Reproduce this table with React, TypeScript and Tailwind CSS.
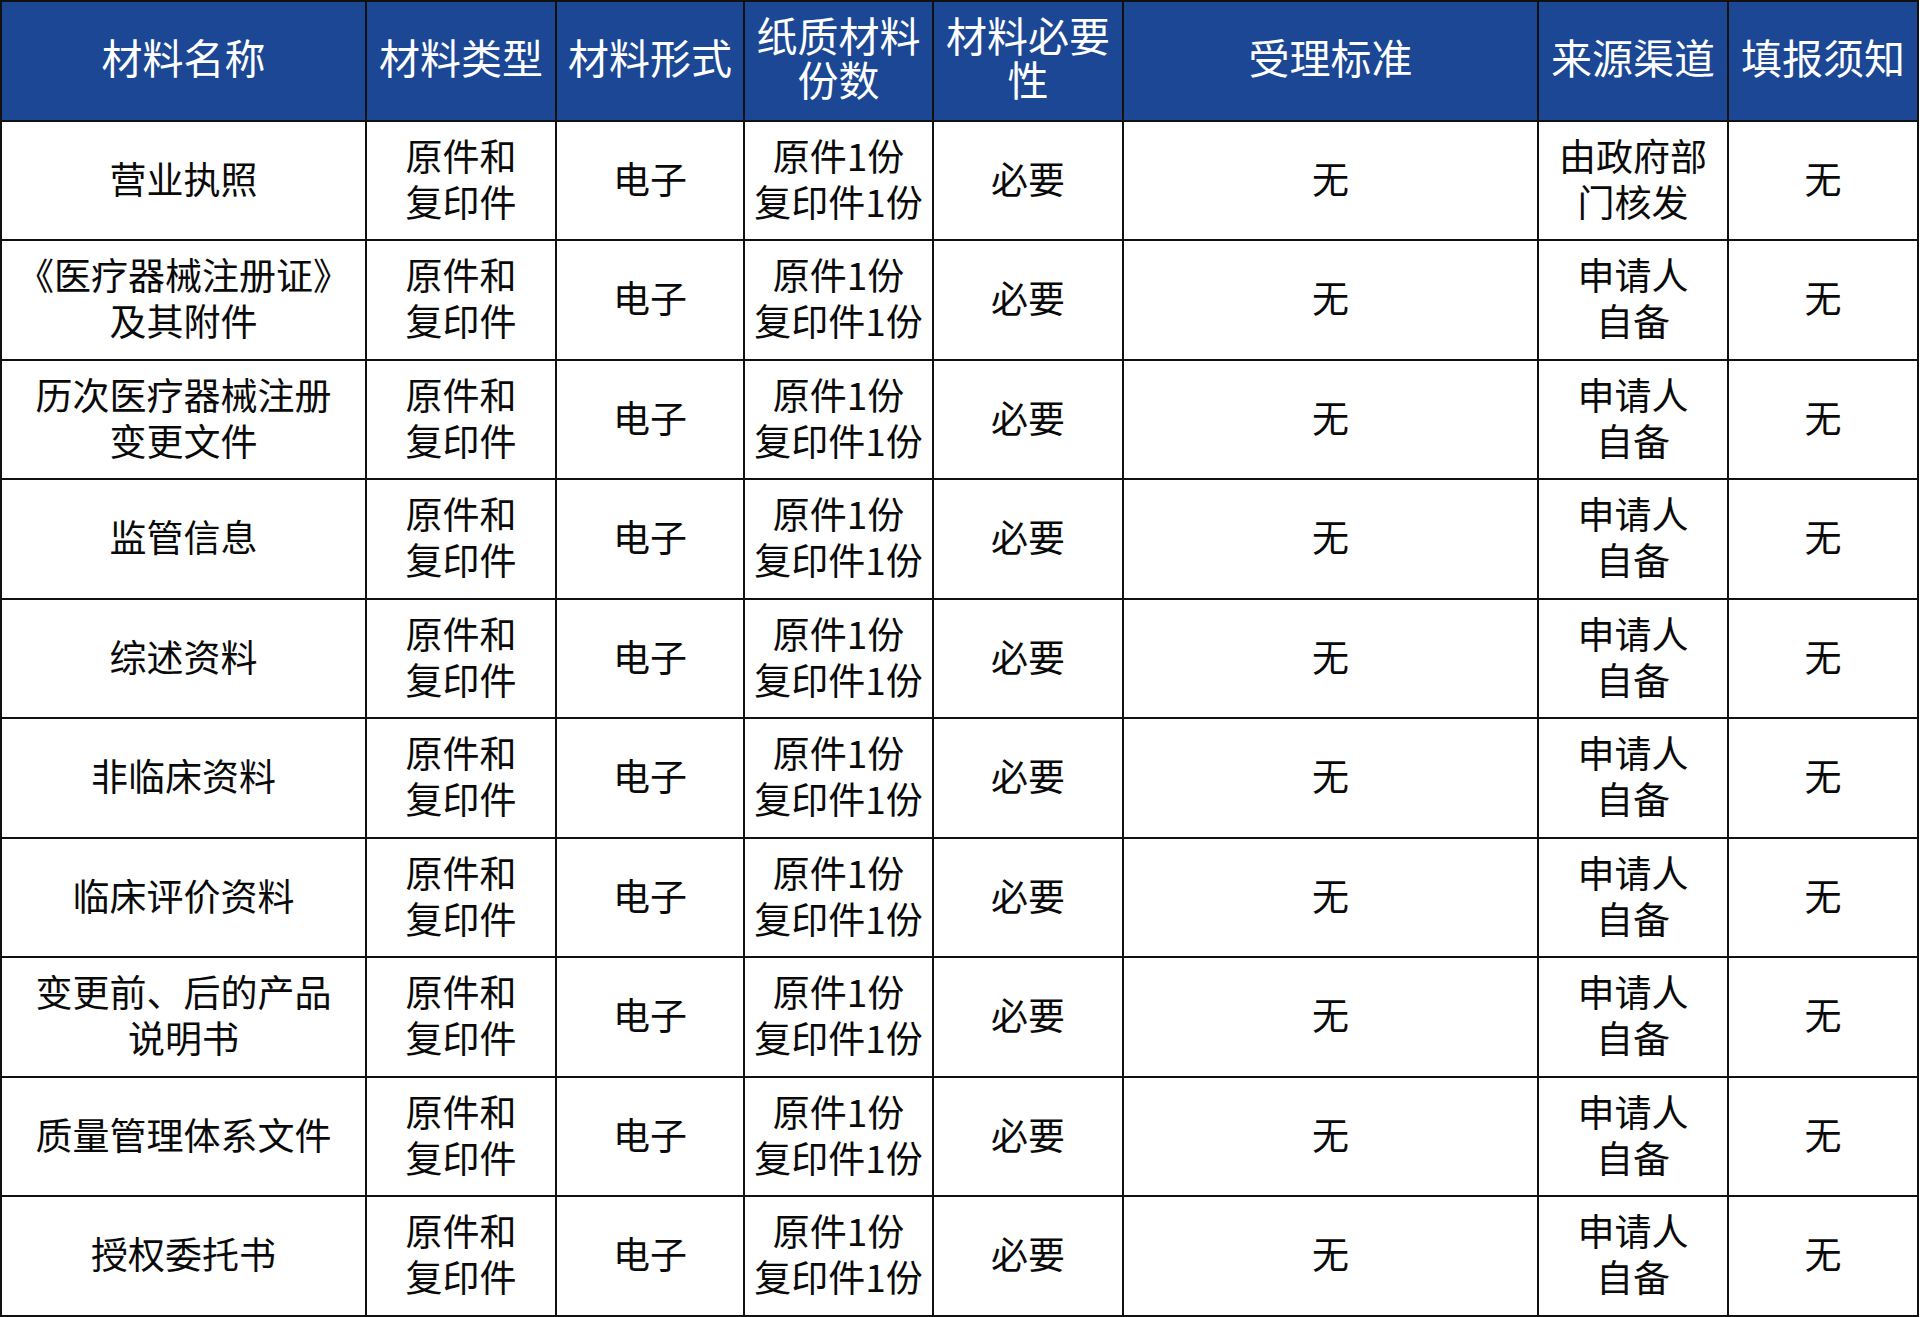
import React from "react";

const headers: string[][] = [
  ["材料名称"],
  ["材料类型"],
  ["材料形式"],
  ["纸质材料", "份数"],
  ["材料必要", "性"],
  ["受理标准"],
  ["来源渠道"],
  ["填报须知"],
];

const materials: { name: string[]; source: string[] }[] = [
  { name: ["营业执照"], source: ["由政府部", "门核发"] },
  { name: ["《医疗器械注册证》", "及其附件"], source: ["申请人", "自备"] },
  { name: ["历次医疗器械注册", "变更文件"], source: ["申请人", "自备"] },
  { name: ["监管信息"], source: ["申请人", "自备"] },
  { name: ["综述资料"], source: ["申请人", "自备"] },
  { name: ["非临床资料"], source: ["申请人", "自备"] },
  { name: ["临床评价资料"], source: ["申请人", "自备"] },
  { name: ["变更前、后的产品", "说明书"], source: ["申请人", "自备"] },
  { name: ["质量管理体系文件"], source: ["申请人", "自备"] },
  { name: ["授权委托书"], source: ["申请人", "自备"] },
];

const Lines = ({ lines }: { lines: string[] }) => (
  <div className="flex flex-col items-center">
    {lines.map((l, i) => (
      <span key={i} className="block whitespace-nowrap">
        {l}
      </span>
    ))}
  </div>
);

const HeadCell = ({ lines }: { lines: string[] }) => (
  <div className="flex items-center justify-center border-r-2 border-b-2 border-[#111] bg-[#1b4794] text-white text-[41px] leading-[44px] pb-[9px]">
    <Lines lines={lines} />
  </div>
);

const Cell = ({ lines }: { lines: string[] }) => (
  <div className="flex items-center justify-center border-r-2 border-b-2 border-[#111] bg-white text-[#0a0a0a] text-[37px] leading-[46px] pb-[5px]">
    <Lines lines={lines} />
  </div>
);

export default function App() {
  return (
    <div
      className="w-[1920px] h-[1317px] bg-white"
      style={{ fontFamily: '"Noto Sans CJK SC", "Noto Sans", sans-serif' }}
    >
      <div className="grid grid-cols-[365px_190px_188px_189px_190px_415px_190px_190px] auto-rows-[119.5px] border-l-2 border-t-2 border-[#111] w-[1919px]">
        {headers.map((h, i) => (
          <HeadCell key={i} lines={h} />
        ))}
        {materials.map((m, i) => (
          <React.Fragment key={i}>
            <Cell lines={m.name} />
            <Cell lines={["原件和", "复印件"]} />
            <Cell lines={["电子"]} />
            <Cell lines={["原件1份", "复印件1份"]} />
            <Cell lines={["必要"]} />
            <Cell lines={["无"]} />
            <Cell lines={m.source} />
            <Cell lines={["无"]} />
          </React.Fragment>
        ))}
      </div>
    </div>
  );
}
